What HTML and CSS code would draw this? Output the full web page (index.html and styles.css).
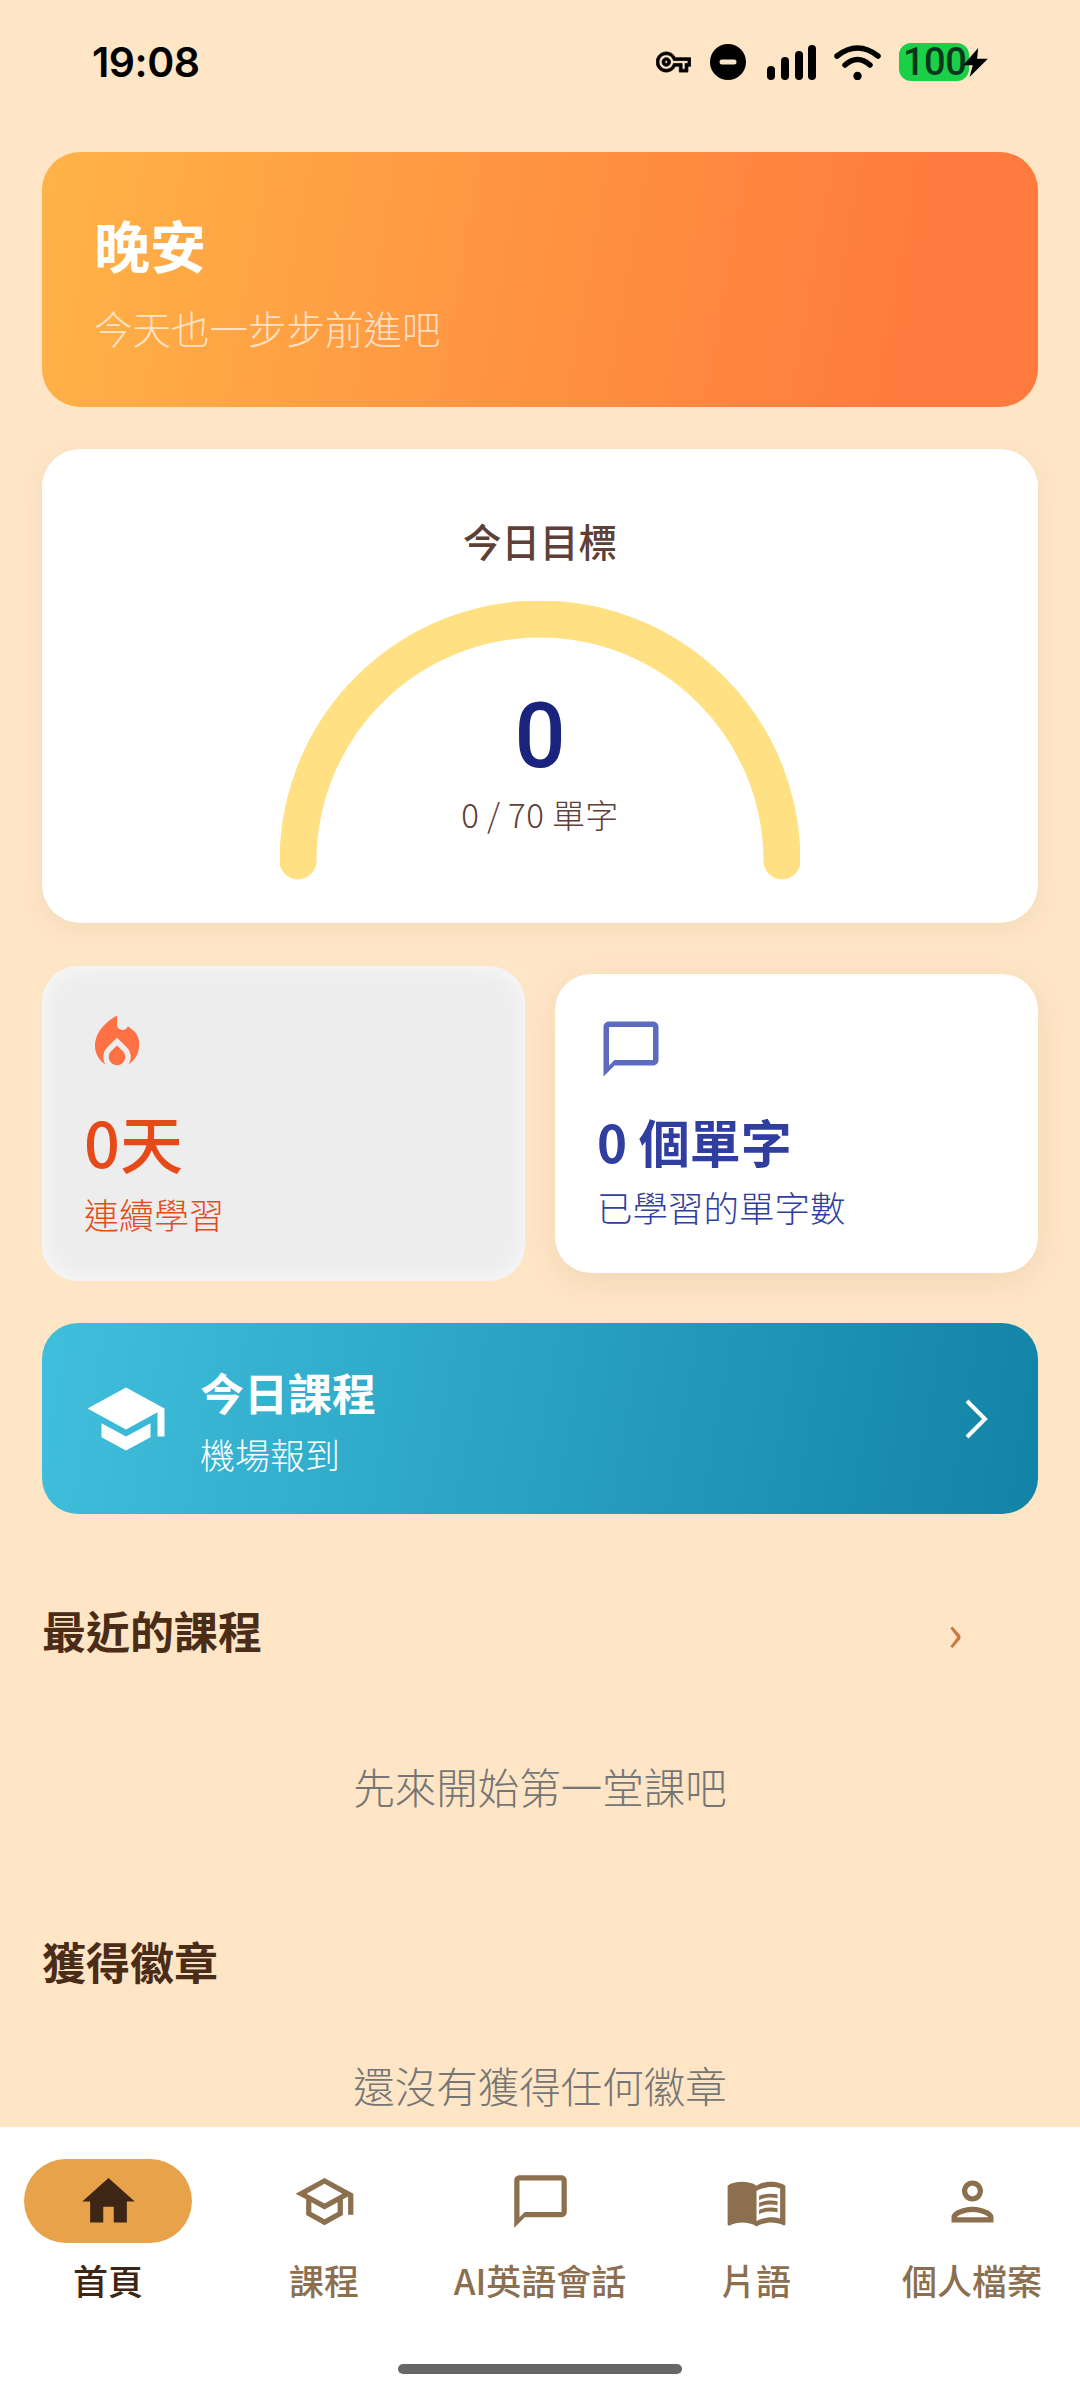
FILE: index.html
```html
<!DOCTYPE html>
<html lang="zh-Hant">
<head>
<meta charset="utf-8">
<title>首頁</title>
<link rel="stylesheet" href="styles.css">
</head>
<body>
<div class="page">
  <header class="status">
    <span class="time">19:08</span>
    <div class="status-icons">
      <svg class="i-key" viewBox="0 3 24 18"><path d="M22 19h-6v-4h-2.680c-1.140 2.420-3.600 4-6.320 4-3.860 0-7-3.140-7-7s3.140-7 7-7c2.720 0 5.170 1.580 6.320 4H24v6h-2v4zm-4-2h2v-4h2v-2H11.940l-.23-.67C11.010 8.340 9.110 7 7 7c-2.760 0-5 2.240-5 5s2.240 5 5 5c2.110 0 4.010-1.340 4.710-3.330l.23-.67H18v4zM7 15c-1.650 0-3-1.350-3-3s1.350-3 3-3 3 1.350 3 3-1.350 3-3 3zm0-4c-.55 0-1 .45-1 1s.45 1 1 1 1-.45 1-1-.45-1-1-1z"/></svg>
      <svg class="i-dnd" viewBox="0 0 36 36"><circle cx="18" cy="18" r="18"/><rect x="9.500" y="15.500" width="17" height="5" rx="2.500" fill="#fde6c8"/></svg>
      <svg class="i-signal" viewBox="0 0 49 35"><rect x="0" y="21" width="8" height="14" rx="4"/><rect x="14" y="12" width="8" height="23" rx="4"/><rect x="28" y="6" width="8" height="29" rx="4"/><rect x="41" y="0" width="8" height="35" rx="4"/></svg>
      <svg class="i-wifi" viewBox="0 0 47 35"><path class="wifi-arc" d="M3 11Q23.500-5 44 11"/><path class="wifi-arc" d="M11 20Q23.500 9 36 20"/><circle cx="23.500" cy="31" r="4.200"/></svg>
      <div class="battery"><span class="battery-level">100</span>
        <svg class="i-bolt" viewBox="0 0 23 27"><path d="M14 0 0 16h9l-3 11L23 10H13z"/></svg>
      </div>
    </div>
  </header>

  <main class="content">
    <section class="hero">
      <h1 class="hero-title">晚安</h1>
      <p class="hero-sub">今天也一步步前進吧</p>
    </section>

    <section class="goal">
      <h2 class="goal-title">今日目標</h2>
      <div class="gauge">
        <svg class="gauge-arc" viewBox="0 0 520 280"><path d="M18 260A242 242 0 0 1 502 260"/></svg>
        <div class="gauge-text">
          <div class="gauge-num">0</div>
          <div class="gauge-sub">0 / 70 單字</div>
        </div>
      </div>
    </section>

    <section class="stats">
      <div class="stat stat-streak">
        <svg class="stat-icon fire" viewBox="0 0 24 24"><path d="M12 12.900l-2.130 2.090C9.310 15.550 9 16.280 9 17.060 9 18.680 10.350 20 12 20s3-1.320 3-2.940c0-.78-.31-1.520-.87-2.070L12 12.900z"/><path d="M16 6l-.44.55C14.380 8.020 12 7.190 12 5.300V2S4 6 4 13c0 2.920 1.560 5.470 3.890 6.860C7.330 19.070 7 18.100 7 17.060c0-1.320.52-2.560 1.470-3.500L12 10.100l3.530 3.470c.95.93 1.470 2.170 1.470 3.500 0 1.020-.31 1.960-.85 2.750 1.990-1.240 3.410-3.350 3.790-5.820C20.520 10.030 19.040 7.860 16 6z"/></svg>
        <div class="stat-value streak-value">0天</div>
        <div class="stat-label streak-label">連續學習</div>
      </div>
      <div class="stat stat-words">
        <svg class="stat-icon bubble" viewBox="0 0 24 24"><path d="M20 2H4c-1.100 0-2 .9-2 2v18l4-4h14c1.100 0 2-.9 2-2V4c0-1.100-.9-2-2-2zm0 14H6l-2 2V4h16v12z"/></svg>
        <div class="stat-value words-value">0 個單字</div>
        <div class="stat-label words-label">已學習的單字數</div>
      </div>
    </section>

    <section class="lesson">
      <svg class="lesson-icon" viewBox="0 0 24 24"><path d="M5 13.180v4L12 21l7-3.820v-4L12 17l-7-3.820zM12 3 1 9l11 6 9-4.910V17h2V9L12 3z"/></svg>
      <div class="lesson-text">
        <div class="lesson-title">今日課程</div>
        <div class="lesson-sub">機場報到</div>
      </div>
      <svg class="lesson-chevron" viewBox="0 0 24 40"><path d="M3 2 21 20 3 38"/></svg>
    </section>

    <div class="section-head first">
      <h2 class="section-title">最近的課程</h2>
      <span class="section-more">›</span>
    </div>
    <p class="empty first-empty">先來開始第一堂課吧</p>

    <div class="section-head second">
      <h2 class="section-title">獲得徽章</h2>
    </div>
    <p class="empty second-empty">還沒有獲得任何徽章</p>
  </main>

  <nav class="nav">
    <div class="tabs">
      <div class="tab active">
        <div class="tab-pill"><svg class="tab-icon" viewBox="0 0 24 24"><path d="M10 20v-6h4v6h5v-8h3L12 3 2 12h3v8z"/></svg></div>
        <span class="tab-label">首頁</span>
      </div>
      <div class="tab">
        <div class="tab-pill"><svg class="tab-icon" viewBox="0 0 24 24"><path d="M12 3 1 9l4 2.180v6L12 21l7-3.820v-6l2-1.090V17h2V9L12 3zm6.820 6L12 12.720 5.180 9 12 5.280 18.820 9zM17 15.990l-5 2.730-5-2.730v-3.720L12 15l5-2.730v3.720z"/></svg></div>
        <span class="tab-label">課程</span>
      </div>
      <div class="tab">
        <div class="tab-pill"><svg class="tab-icon" viewBox="0 0 24 24"><path d="M20 2H4c-1.100 0-2 .9-2 2v18l4-4h14c1.100 0 2-.9 2-2V4c0-1.100-.9-2-2-2zm0 14H6l-2 2V4h16v12z"/></svg></div>
        <span class="tab-label">AI英語會話</span>
      </div>
      <div class="tab">
        <div class="tab-pill"><svg class="tab-icon" viewBox="0 0 24 24"><path d="M21 5c-1.110-.35-2.330-.5-3.500-.5-1.950 0-4.050.4-5.500 1.500-1.450-1.100-3.550-1.500-5.500-1.500S2.450 4.900 1 6v14.650c0 .25.25.5.5.5.1 0 .15-.05.25-.05C3.100 20.450 5.050 20 6.500 20c1.950 0 4.050.4 5.500 1.500 1.350-.85 3.800-1.500 5.500-1.500 1.650 0 3.350.3 4.750 1.050.1.05.15.05.25.05.25 0 .5-.25.5-.5V6c-.6-.45-1.250-.75-2-1zm0 13.500c-1.100-.35-2.300-.5-3.500-.5-1.700 0-4.150.65-5.500 1.500V8c1.350-.85 3.800-1.500 5.500-1.500 1.200 0 2.400.15 3.500.5v11.500z"/><path d="M17.500 10.500c.88 0 1.730.09 2.500.26V9.240c-.79-.15-1.640-.24-2.500-.24-1.700 0-3.240.29-4.500.83v1.660c1.130-.64 2.700-.99 4.500-.99zM13 12.490v1.660c1.130-.64 2.700-.99 4.500-.99.88 0 1.730.09 2.500.26V11.900c-.79-.15-1.640-.24-2.500-.24-1.700 0-3.240.3-4.500.83zM17.500 14.330c-1.700 0-3.240.29-4.500.83v1.660c1.130-.64 2.700-.99 4.500-.99.88 0 1.730.09 2.500.26v-1.520c-.79-.16-1.640-.24-2.500-.24z"/></svg></div>
        <span class="tab-label">片語</span>
      </div>
      <div class="tab">
        <div class="tab-pill"><svg class="tab-icon" viewBox="0 0 24 24"><path d="M12 6c1.100 0 2 .9 2 2s-.9 2-2 2-2-.9-2-2 .9-2 2-2m0 10c2.700 0 5.800 1.290 6 2H6c.23-.72 3.310-2 6-2m0-12C9.790 4 8 5.790 8 8s1.790 4 4 4 4-1.790 4-4-1.790-4-4-4zm0 10c-2.670 0-8 1.340-8 4v2h16v-2c0-2.660-5.330-4-8-4z"/></svg></div>
        <span class="tab-label">個人檔案</span>
      </div>
    </div>
    <div class="home-bar"></div>
  </nav>
</div>
</body>
</html>
```

FILE: styles.css
```css
* { box-sizing: border-box; }
html, body { margin: 0; padding: 0; }
body {
  width: 1080px;
  height: 2400px;
  background: #fde5c6;
  font-family: "Noto Sans CJK TC", "Noto Sans", Roboto, sans-serif;
  overflow: hidden;
}
h1, h2, p { margin: 0; font-weight: inherit; }
svg { display: block; fill: currentColor; }

.page { height: 2400px; display: flex; flex-direction: column; }

/* status bar */
.status {
  height: 152px;
  flex: none;
  display: flex;
  justify-content: space-between;
  align-items: flex-start;
  padding: 43px 92px 0 92px;
  color: #000;
}
.time { font: 600 41px/38px Inter, Roboto, sans-serif; letter-spacing: -0.5px; }
.status-icons { display: flex; align-items: center; height: 38px; }
.i-key { width: 35px; height: 26px; margin-right: 19px; stroke: #000; stroke-width: 0.5; }
.i-dnd { width: 36px; height: 36px; margin-right: 21px; }
.i-signal { width: 49px; height: 35px; margin-right: 18px; }
.i-wifi { width: 47px; height: 35px; margin-right: 18px; }
.wifi-arc { fill: none; stroke: #000; stroke-width: 5.5; stroke-linecap: round; }
.battery { display: flex; align-items: center; }
.battery-level {
  width: 70px;
  height: 38px;
  background: #1ccf48;
  border-radius: 12px;
  color: #07361a;
  font: 500 38px/38px Roboto, sans-serif;
  text-align: left;
  padding-left: 4px;
  letter-spacing: -0.5px;
  white-space: nowrap;
}
.i-bolt { width: 25px; height: 29px; margin-left: -6px; position: relative; }

/* content */
.content {
  flex: 1;
  min-height: 0;
  overflow: hidden;
  padding: 0 42px;
  display: flex;
  flex-direction: column;
}

.hero {
  height: 255px;
  flex: none;
  padding: 54px 52px 0;
  border-radius: 38px;
  background: linear-gradient(100deg, #ffb347 0%, #ff7a3d 88%);
  color: #fff;
}
.hero-title { font-size: 56px; line-height: 75px; font-weight: 700; }
.hero-sub { font-size: 38.5px; line-height: 52px; margin-top: 20px; color: rgba(255, 255, 255, 0.7); font-weight: 300; }

.goal {
  height: 474px;
  flex: none;
  margin-top: 42px;
  padding-top: 63px;
  background: #fff;
  border-radius: 38px;
  box-shadow: 0 6px 20px rgba(150, 100, 40, 0.08);
  display: flex;
  flex-direction: column;
  align-items: center;
}
.goal-title { font-size: 38.5px; line-height: 56px; font-weight: 500; color: #5d4037; }
.gauge { position: relative; width: 520px; height: 280px; margin-top: 33px; }
.gauge-arc { width: 520px; height: 280px; }
.gauge-arc path { fill: none; stroke: #ffe082; stroke-width: 37; stroke-linecap: round; }
.gauge-text {
  position: absolute;
  left: 0;
  right: 0;
  top: 80px;
  display: flex;
  flex-direction: column;
  align-items: center;
}
.gauge-num { font: 500 90px/112px Roboto, sans-serif; color: #1a237e; }
.gauge-sub { font-size: 33px; line-height: 44px; margin-top: -1px; letter-spacing: 0.4px; color: #5d4037; font-weight: 300; }

.stats {
  flex: none;
  margin-top: 43px;
  height: 315px;
  display: flex;
  justify-content: space-between;
  align-items: center;
}
.stat { width: 483px; border-radius: 36px; padding: 42px; }
.stat-icon { width: 66px; height: 66px; }
.stat-value { white-space: nowrap; }
.stat-streak {
  height: 315px;
  padding-top: 44px;
  background: #ededed;
  box-shadow: inset 0 0 24px rgba(255, 255, 255, 0.75);
}
.fire { color: #ff7043; }
.streak-value { margin-top: 32px; font-size: 63px; line-height: 66px; font-weight: 500; color: #e64a19; }
.streak-label { margin-top: 17px; font-size: 35px; line-height: 46px; color: #e64a19; font-weight: 300; }
.stat-words {
  height: 299px;
  background: #fff;
  box-shadow: 0 8px 28px rgba(150, 100, 40, 0.1);
}
.bubble { color: #5c6bc0; margin-left: 1px; }
.words-value { margin-top: 26px; font-size: 51px; line-height: 66px; font-weight: 700; color: #303f9f; }
.words-label { margin-top: 10px; font-size: 35.5px; line-height: 46px; color: #303f9f; font-weight: 300; }

.lesson {
  flex: none;
  height: 191px;
  margin-top: 42px;
  padding: 0 50px 0 42px;
  border-radius: 36px;
  background: linear-gradient(100deg, #40bfdc 0%, #1283a6 100%);
  color: #fff;
  display: flex;
  align-items: center;
  gap: 32px;
}
.lesson-icon { width: 84px; height: 84px; flex: none; }
.lesson-text { flex: 1; }
.lesson-title { font-size: 44px; line-height: 62px; font-weight: 700; }
.lesson-sub { font-size: 35px; line-height: 46px; font-weight: 300; margin-top: 8px; }
.lesson-chevron { width: 24px; height: 40px; flex: none; }
.lesson-chevron path { fill: none; stroke: #fff; stroke-width: 4; }

.section-head { flex: none; display: flex; justify-content: space-between; align-items: center; }
.section-head.first { margin-top: 86px; }
.section-head.second { margin-top: 117px; }
.section-title { font-size: 44px; line-height: 60px; font-weight: 700; color: #4a2c17; }
.section-more { font-size: 52px; line-height: 60px; color: #c9773f; margin-right: 75px; }
.empty { text-align: center; font-size: 41.5px; line-height: 56px; color: #757575; font-weight: 300; }
.first-empty { margin-top: 98px; }
.second-empty { margin-top: 66px; }

/* bottom nav */
.nav {
  flex: none;
  height: 273px;
  background: #fff;
  display: flex;
  flex-direction: column;
  align-items: center;
  padding-top: 32px;
}
.tabs { width: 100%; display: grid; grid-template-columns: repeat(5, 216px); }
.tab { display: flex; flex-direction: column; align-items: center; color: #8b6f4e; height: 145px; }
.tab-pill { width: 168px; height: 84px; border-radius: 42px; display: flex; align-items: center; justify-content: center; }
.tab-icon { width: 63px; height: 63px; }
.tab-label { margin-top: 14px; font-size: 35px; line-height: 46px; font-weight: 500; white-space: nowrap; }
.tab.active { color: #3e2615; }
.tab.active .tab-pill { background: #e8a24a; }
.home-bar { width: 284px; height: 10px; margin-top: 60px; border-radius: 5px; background: #666; }
```
